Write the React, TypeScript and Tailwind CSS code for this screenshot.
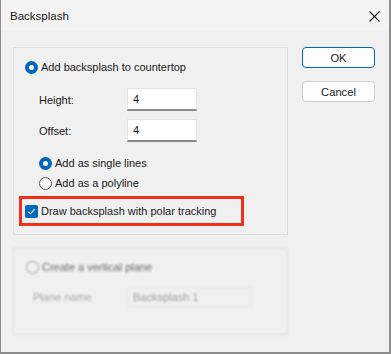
import React from "react";

function Radio({ checked }: { checked?: boolean }) {
  return checked ? (
    <span className="box-border inline-block h-[13px] w-[13px] shrink-0 rounded-full border-[4px] border-[#0067c0] bg-white" />
  ) : (
    <span className="box-border inline-block h-[13px] w-[13px] shrink-0 rounded-full border border-[#5a5a5a] bg-[#f7f7f7]" />
  );
}

export default function App() {
  return (
    <div
      className="box-border flex h-[354px] w-[391px] flex-col border-b-2 border-l border-r-2 border-[#8c8c8c] bg-[#f0f0f0] text-[11px] leading-[16px] text-[#1a1a1a]"
      style={{ fontFamily: '"Segoe UI", "Liberation Sans", Arial, sans-serif' }}
    >
      <div className="flex h-[31px] shrink-0 items-center justify-between bg-[#f3f3f3] pl-[9px] pr-[9px]">
        <span className="text-[11.5px]">Backsplash</span>
        <svg width="11" height="11" viewBox="0 0 11 11" className="mt-[1px]">
          <path d="M0.5 0.5 L10.5 10.5 M10.5 0.5 L0.5 10.5" stroke="#1a1a1a" strokeWidth="1.1" />
        </svg>
      </div>
      <div className="flex flex-1 pt-[16px]">
        <div className="ml-[12px] flex w-[275px] flex-col">
          <div className="box-border flex h-[188px] flex-col border border-[#dcdcdc] pl-[11px] pt-[11px]">
            <div className="flex h-[16px] items-center gap-[3px]">
              <Radio checked />
              <span>Add backsplash to countertop</span>
            </div>
            <div className="mt-[13px] flex items-center pl-[14px]">
              <span className="w-[88px]">Height:</span>
              <div className="box-border flex h-[23px] w-[70px] items-center border border-b-2 border-[#e3e3e3] border-b-[#8a8a8a] bg-white pl-[5px]">
                4
              </div>
            </div>
            <div className="mt-[8px] flex items-center pl-[14px]">
              <span className="w-[88px]">Offset:</span>
              <div className="box-border flex h-[23px] w-[70px] items-center border border-b-2 border-[#e3e3e3] border-b-[#8a8a8a] bg-white pl-[5px]">
                4
              </div>
            </div>
            <div className="mt-[13px] flex h-[16px] items-center gap-[3px] pl-[14px]">
              <Radio checked />
              <span>Add as single lines</span>
            </div>
            <div className="mt-[4px] flex h-[16px] items-center gap-[3px] pl-[14px]">
              <Radio />
              <span>Add as a polyline</span>
            </div>
            <div className="-ml-[6px] mt-[5px] box-border flex h-[30px] w-[225px] items-center gap-[3px] border-[3px] border-[#f0301a] pl-[3px]">
              <span className="flex h-[13px] w-[13px] items-center justify-center rounded-[2px] bg-[#0067c0]">
                <svg width="9" height="9" viewBox="0 0 9 9">
                  <path d="M1.5 4.8 L3.6 6.8 L7.6 2.2" stroke="#fff" strokeWidth="1.1" fill="none" />
                </svg>
              </span>
              <span>Draw backsplash with polar tracking</span>
            </div>
          </div>
          <div className="mt-[13px] box-border h-[87px] border border-[#dcdcdc] pl-[12px] pt-[10px] blur-[0.8px]">
            <div className="flex h-[16px] items-center gap-[3px] text-[#666666]">
              <span className="box-border inline-block h-[13px] w-[13px] rounded-full border border-[#9a9a9a]" />
              <span>Create a vertical plane</span>
            </div>
            <div className="mt-[12px] flex items-center pl-[7px] text-[#a8a8a8]">
              <span className="w-[95px]">Plane name</span>
              <div className="box-border flex h-[20px] w-[124px] items-center border border-[#e6e6e6] bg-[#f0f0f0] pl-[4px] text-[#9c9c9c]">
                Backsplash 1
              </div>
            </div>
          </div>
        </div>
        <div className="ml-[14px] flex flex-col">
          <button className="box-border h-[21px] w-[73px] rounded-[4px] border border-[#0067c0] bg-[#fdfdfd] text-[11.2px] leading-[16px]">
            OK
          </button>
          <button className="mt-[13px] box-border h-[21px] w-[73px] rounded-[4px] border border-[#d0d0d0] bg-[#fdfdfd] text-[11.2px] leading-[16px]">
            Cancel
          </button>
        </div>
      </div>
    </div>
  );
}
